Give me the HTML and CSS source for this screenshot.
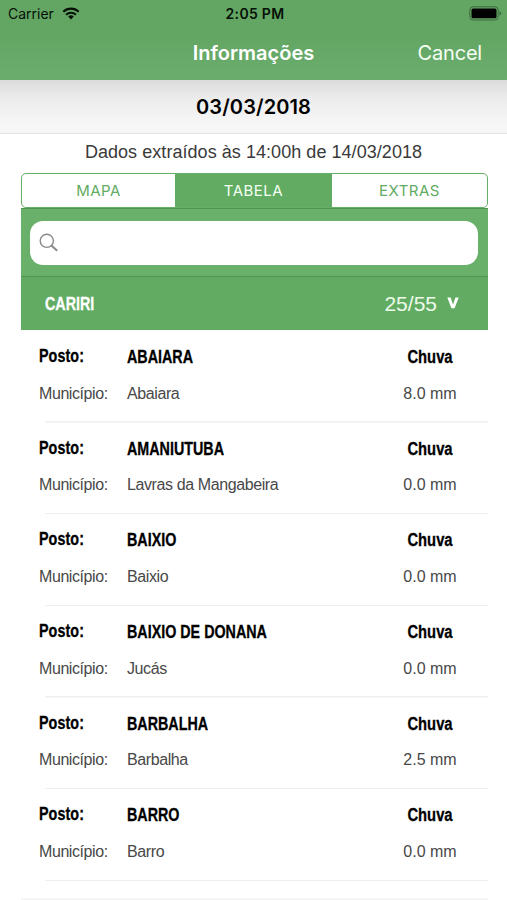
FILE: index.html
```
<!DOCTYPE html>
<html lang="pt-BR">
<head>
  <meta charset="UTF-8" />
  <meta name="viewport" content="width=device-width, initial-scale=1" />
  <title>Informações</title>
  <link rel="stylesheet" href="styles.css">
</head>
<body>

  <!-- Status bar + navigation -->
  <header class="top">
    <div class="status">
      <div class="carrier">
        <span>Carrier</span>
        <svg class="wifi" width="18" height="13" viewBox="0 0 18 13" fill="none" stroke="#061006">
          <path d="M1.3 4.8a11 11 0 0 1 15.4 0" stroke-width="2.2" />
          <path d="M4.1 7.7a7 7 0 0 1 9.8 0" stroke-width="2.1" />
          <path d="M9 12.4L6.2 9.6a4 4 0 0 1 5.6 0z" fill="#061006" stroke="none" />
        </svg>
      </div>
      <div class="time">2:05 PM</div>
      <svg class="battery" width="33" height="15" viewBox="0 0 33 15">
        <rect x="0.8" y="0.8" width="28.4" height="13.2" rx="3.2" fill="none" stroke="#3c6a3d" stroke-width="1" />
        <rect x="2.5" y="2.5" width="25" height="9.8" rx="1.6" fill="#000" />
        <path d="M30.5 5.2q1.8.7 1.8 2.2t-1.8 2.2z" fill="#3c6a3d" />
      </svg>
    </div>
    <nav>
      <h1>Informações</h1>
      <a href="#" class="cancel">Cancel</a>
    </nav>
  </header>

  <div class="date">03/03/2018</div>
  <p class="extracted">Dados extraídos às 14:00h de 14/03/2018</p>

  <main>
    <div class="tabs">
      <a href="#" class="tab">MAPA</a>
      <a href="#" class="tab active">TABELA</a>
      <a href="#" class="tab">EXTRAS</a>
    </div>

    <div class="search">
      <div class="search-box">
        <svg width="20" height="20" viewBox="0 0 20 20" fill="none" stroke="#8b8b8d">
          <circle cx="7.8" cy="7.8" r="6.6" stroke-width="1.4" />
          <path d="M12.4 12.4l5.8 5.4" stroke-width="2.1" />
        </svg>
      </div>
    </div>

    <div class="region">
      <span class="region-name">CARIRI</span>
      <span class="region-count">25/55</span>
      <svg class="chevron" width="12" height="12" viewBox="0 0 12 12" fill="#fff">
        <path d="M0.3 0.5h3.3L6 7.4L8.5 0.5h3.2L7.6 11.2H4.4z" />
      </svg>
    </div>

    <!-- Stations -->
    <section class="list">
      <article class="row">
        <b class="label">Posto:</b><b class="name">ABAIARA</b><b class="rain">Chuva</b>
        <span class="label">Município:</span><span class="city">Abaiara</span><span class="mm">8.0 mm</span>
      </article>
      <article class="row">
        <b class="label">Posto:</b><b class="name">AMANIUTUBA</b><b class="rain">Chuva</b>
        <span class="label">Município:</span><span class="city">Lavras da Mangabeira</span><span class="mm">0.0 mm</span>
      </article>
      <article class="row">
        <b class="label">Posto:</b><b class="name">BAIXIO</b><b class="rain">Chuva</b>
        <span class="label">Município:</span><span class="city">Baixio</span><span class="mm">0.0 mm</span>
      </article>
      <article class="row">
        <b class="label">Posto:</b><b class="name">BAIXIO DE DONANA</b><b class="rain">Chuva</b>
        <span class="label">Município:</span><span class="city">Jucás</span><span class="mm">0.0 mm</span>
      </article>
      <article class="row">
        <b class="label">Posto:</b><b class="name">BARBALHA</b><b class="rain">Chuva</b>
        <span class="label">Município:</span><span class="city">Barbalha</span><span class="mm">2.5 mm</span>
      </article>
      <article class="row">
        <b class="label">Posto:</b><b class="name">BARRO</b><b class="rain">Chuva</b>
        <span class="label">Município:</span><span class="city">Barro</span><span class="mm">0.0 mm</span>
      </article>
    </section>
    <div class="list-end"></div>
  </main>

</body>
</html>
```
FILE: styles.css
```
* {
  margin: 0;
  padding: 0;
  box-sizing: border-box;
}

body {
  font-family: 'Liberation Sans', Arial, sans-serif;
  background: #fff;
  color: #000;
  height: 900px;
  overflow: hidden;
}

a {
  text-decoration: none;
}

.top {
  height: 79.5px;
  background: linear-gradient(#63a664, #63a664 45%, #6bad6d);
  font-family: Inter, sans-serif;
}

.status {
  height: 27px;
  display: grid;
  grid-template-columns: 1fr auto 1fr;
  align-items: center;
  padding: 0 5px 0 8px;
  color: #061006;
}

.carrier {
  display: flex;
  align-items: center;
  gap: 8px;
  font-size: 14px;
}

.time {
  font-size: 14px;
  font-weight: 600;
  letter-spacing: 0.3px;
}

.battery {
  justify-self: end;
}

nav {
  height: 51px;
  display: grid;
  grid-template-columns: 1fr auto 1fr;
  align-items: center;
  padding: 0 25px;
}

nav h1 {
  grid-column: 2;
  font-size: 20px;
  font-weight: 600;
  color: #fff;
}

.cancel {
  justify-self: end;
  font-size: 20px;
  letter-spacing: -0.2px;
  color: #f6fff4;
}

.date {
  height: 54px;
  border-bottom: 1px solid #e2e2e2;
  background: linear-gradient(#dcdbdc, #ececec 35%, #f7f7f7 85%);
  font-family: Inter, sans-serif;
  font-size: 20px;
  font-weight: 600;
  line-height: 54px;
  letter-spacing: 0.1px;
  text-align: center;
}

.extracted {
  height: 39.5px;
  line-height: 36px;
  font-size: 18px;
  letter-spacing: 0.05px;
  color: #3a3a3a;
  text-align: center;
  white-space: nowrap;
}

main {
  margin: 0 19px 0 21px;
}

.tabs {
  height: 35px;
  display: grid;
  grid-template-columns: 153px 157px 1fr;
  border: 1px solid #67af68;
  border-radius: 5px;
  overflow: hidden;
  font-family: Inter, sans-serif;
  font-size: 15px;
  letter-spacing: 0.5px;
}

.tab {
  line-height: 34px;
  text-align: center;
  color: #61ac62;
}

.tab.active {
  background: #61ac62;
  color: #f4fff2;
}

.search {
  height: 69px;
  padding: 12px 10px 12px 9px;
  background: #69b06a;
  border-top: 1px solid #509451;
  border-bottom: 1px solid #509451;
}

.search-box {
  height: 44px;
  display: flex;
  align-items: center;
  padding-left: 9px;
  border-radius: 13px;
  background: #fff;
}

.region {
  height: 53px;
  display: flex;
  align-items: center;
  padding: 1px 29px 0 24px;
  background: #61ac62;
  color: #fff;
}

/* condensed bold */
.region-name,
.row b {
  font-size: 18px;
  font-weight: bold;
  -webkit-text-stroke: 0.3px;
  transform: scaleX(0.795);
  transform-origin: left center;
}

.region-name {
  flex: 1;
}

.region-count {
  font-size: 21px;
  color: #eefbea;
}

.chevron {
  margin: -3px 0 0 10px;
}

.list {
  padding-top: 1px;
}

.row {
  height: 91.7px;
  display: grid;
  grid-template-columns: 88px 1fr 116px;
  grid-template-rows: 37px 35px;
  align-items: center;
  padding: 8px 0 0 18px;
  background: linear-gradient(#efefef, #efefef) 24px 100% / 100% 1.5px no-repeat;
  font-size: 16px;
  letter-spacing: -0.4px;
  color: #484848;
  white-space: nowrap;
}

.row b {
  letter-spacing: 0;
  color: #000;
}

.row .label {
  letter-spacing: -0.42px;
}

.row b.label {
  letter-spacing: 0.1px;
  margin-top: -2px;
}

.row b.rain {
  transform: scaleX(0.82);
  transform-origin: center;
}

.rain,
.mm {
  text-align: center;
}

.mm {
  letter-spacing: 0;
}

.list-end {
  margin-top: 17px;
  height: 10px;
  background: #f5f5f5;
}
```
